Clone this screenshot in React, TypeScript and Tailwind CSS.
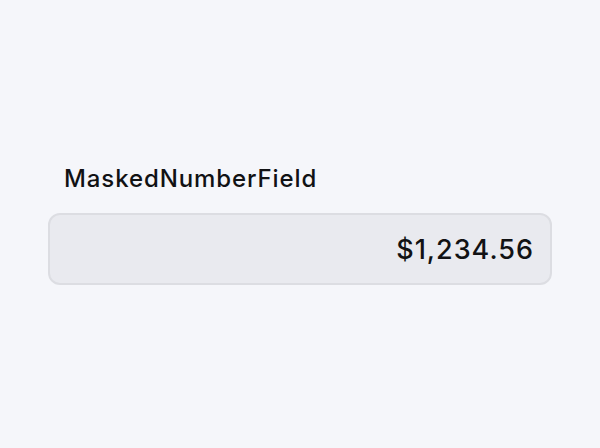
import React, { useState } from 'react';

const formatMoney = (n: number) =>
  '$' + n.toLocaleString('en-US', { minimumFractionDigits: 2, maximumFractionDigits: 2 });

const App: React.FC = () => {
  const [value] = useState(1234.56);

  return (
    <div className="h-screen w-screen bg-[#f5f6fa] flex items-center justify-center font-['Inter',sans-serif]">
      <div className="w-[504px] flex flex-col">
        <label className="px-4 text-[24px] leading-8 font-medium tracking-[0.9px] text-[#111214] mb-[18px]">
          MaskedNumberField
        </label>
        <input
          readOnly
          value={formatMoney(value)}
          className="h-[72px] w-full rounded-xl border-2 border-[#dcdde2] bg-[#e9eaef] px-4 text-right text-[27px] font-medium tracking-[1px] text-[#111214] outline-none"
        />
      </div>
    </div>
  );
};

export default App;
